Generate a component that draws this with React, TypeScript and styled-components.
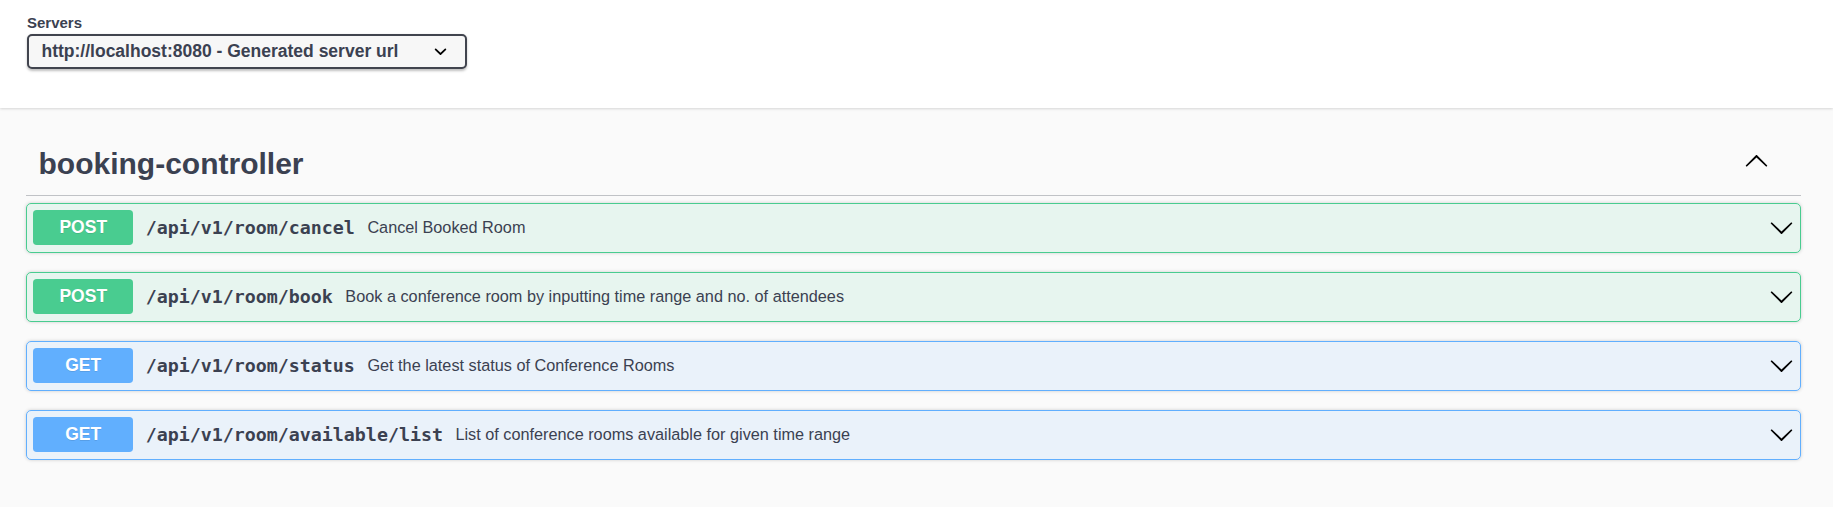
import React from "react";
import styled, { createGlobalStyle } from "styled-components";

const GlobalStyle = createGlobalStyle`
  html, body {
    margin: 0;
    padding: 0;
    background: #fafafa;
    font-family: "Liberation Sans", Arial, sans-serif;
    color: #3b4151;
  }
  #root {
    min-height: 507px;
  }
`;

const SchemeContainer = styled.div`
  background: #fff;
  box-shadow: 0 1.25px 2.5px 0 rgba(0, 0, 0, 0.15);
  padding: 14px 0 39px 27px;
  display: flex;
  flex-direction: column;
  gap: 2px;
`;

const ServersTitle = styled.div`
  font-size: 15px;
  line-height: 18px;
  font-weight: 700;
  color: #3b4151;
`;

const SelectBox = styled.div`
  box-sizing: border-box;
  width: 440px;
  height: 35px;
  display: flex;
  align-items: center;
  justify-content: space-between;
  padding: 0 12.5px 0 12.5px;
  background: #f7f7f7;
  border: 2.5px solid #41444e;
  border-radius: 5px;
  box-shadow: 0 1.25px 2.5px 0 rgba(0, 0, 0, 0.25);
  font-size: 17.5px;
  font-weight: 700;
  color: #3b4151;
  white-space: nowrap;
`;

const Section = styled.div`
  padding: 25px 32px 0 26px;
`;

const TagHeader = styled.div`
  box-sizing: border-box;
  height: 63px;
  display: flex;
  align-items: center;
  justify-content: space-between;
  padding: 0 0 0 12.5px;
  border-bottom: 1px solid rgba(59, 65, 81, 0.3);
  margin-bottom: 6.5px;
`;

const TagTitle = styled.h3`
  margin: 0;
  font-size: 30px;
  line-height: 38px;
  font-weight: 700;
  color: #3b4151;
`;

const TagArrow = styled.svg`
  width: 25px;
  height: 25px;
  margin: 0 32px 5px 0;
  transform: rotate(180deg);
  fill: #000;
`;

const OpBlock = styled.div<{ $color: string; $bg: string }>`
  box-sizing: border-box;
  display: flex;
  align-items: center;
  padding: 6.5px 6.25px;
  margin-bottom: 19px;
  background: ${(p) => p.$bg};
  border: 1px solid ${(p) => p.$color};
  border-radius: 5px;
  box-shadow: 0 0 3.75px rgba(0, 0, 0, 0.19);
`;

const MethodBadge = styled.span<{ $color: string }>`
  flex: none;
  width: 100px;
  height: 35px;
  display: flex;
  align-items: center;
  justify-content: center;
  background: ${(p) => p.$color};
  border-radius: 3.75px;
  color: #fff;
  font-size: 17.5px;
  font-weight: 700;
  text-shadow: 0 1.25px 0 rgba(0, 0, 0, 0.1);
`;

const Path = styled.span`
  padding: 0 12.5px;
  font-family: "DejaVu Sans Mono", "Liberation Mono", monospace;
  font-size: 18.3px;
  font-weight: 700;
  color: #3b4151;
  white-space: nowrap;
`;

const Description = styled.span`
  flex: 1 1 auto;
  font-size: 16.25px;
  color: #3b4151;
`;

const RowArrow = styled.svg`
  flex: none;
  width: 25px;
  height: 25px;
  fill: #000;
`;

const SmallChevron = styled.svg`
  flex: none;
  width: 25px;
  height: 25px;
  fill: #000;
`;

const ARROW =
  "M17.418 6.109c.272-.268.709-.268.979 0s.271.701 0 .969l-7.908 7.83c-.27.268-.707.268-.979 0l-7.908-7.83c-.27-.268-.27-.701 0-.969.271-.268.709-.268.979 0L10 13.25l7.418-7.141z";
const SELECT_ARROW =
  "M13.418 7.859a.695.695 0 01.978 0 .68.68 0 010 .969l-3.908 3.83a.697.697 0 01-.979 0l-3.908-3.83a.68.68 0 010-.969.695.695 0 01.978 0L10 11l3.418-3.141z";

const METHODS = {
  POST: { color: "#49cc90", bg: "rgba(73, 204, 144, 0.1)" },
  GET: { color: "#61affe", bg: "rgba(97, 175, 254, 0.1)" },
};

type Op = { method: keyof typeof METHODS; path: string; desc: string };

const OPS: Op[] = [
  { method: "POST", path: "/api/v1/room/cancel", desc: "Cancel Booked Room" },
  {
    method: "POST",
    path: "/api/v1/room/book",
    desc: "Book a conference room by inputting time range and no. of attendees",
  },
  { method: "GET", path: "/api/v1/room/status", desc: "Get the latest status of Conference Rooms" },
  {
    method: "GET",
    path: "/api/v1/room/available/list",
    desc: "List of conference rooms available for given time range",
  },
];

export default function App() {
  return (
    <>
      <GlobalStyle />
      <SchemeContainer>
        <ServersTitle>Servers</ServersTitle>
        <SelectBox>
          <span>http://localhost:8080 - Generated server url</span>
          <SmallChevron viewBox="0 0 20 20">
            <path d={SELECT_ARROW} />
          </SmallChevron>
        </SelectBox>
      </SchemeContainer>
      <Section>
        <TagHeader>
          <TagTitle>booking-controller</TagTitle>
          <TagArrow viewBox="0 0 20 20">
            <path d={ARROW} />
          </TagArrow>
        </TagHeader>
        {OPS.map((op) => {
          const m = METHODS[op.method];
          return (
            <OpBlock key={op.path} $color={m.color} $bg={m.bg}>
              <MethodBadge $color={m.color}>{op.method}</MethodBadge>
              <Path>{op.path}</Path>
              <Description>{op.desc}</Description>
              <RowArrow viewBox="0 0 20 20">
                <path d={ARROW} />
              </RowArrow>
            </OpBlock>
          );
        })}
      </Section>
    </>
  );
}
